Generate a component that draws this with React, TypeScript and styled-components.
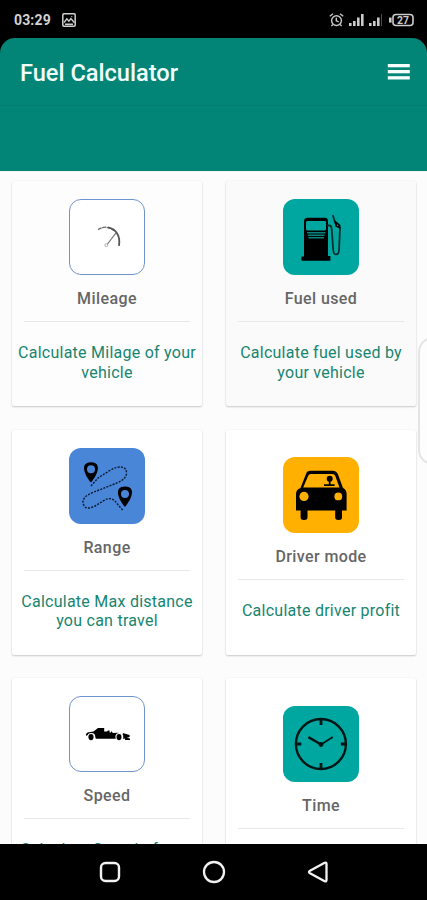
import React from "react";
import styled, { createGlobalStyle } from "styled-components";

const GlobalStyle = createGlobalStyle`
  * { box-sizing: border-box; }
  body { margin: 0; background: #000; font-family: Roboto, "Liberation Sans", sans-serif; }
  svg { display: block; flex: none; }
`;

const Phone = styled.div`
  position: relative;
  width: 427px;
  height: 900px;
  display: flex;
  flex-direction: column;
  overflow: hidden;
  background: #000;
`;

const StatusBar = styled.div`
  flex: none;
  height: 38px;
  display: flex;
  align-items: center;
  justify-content: space-between;
  padding: 1px 13px 0 14px;
  color: #d2d2d2;
`;

const StatusGroup = styled.div<{ $gap: number }>`
  display: flex;
  align-items: center;
  gap: ${(p) => p.$gap}px;
`;

const Clock = styled.span`
  width: 38px;
  font-size: 14px;
  font-weight: 700;
  letter-spacing: 0.15px;
  white-space: nowrap;
`;

const Header = styled.header`
  flex: none;
  height: 133px;
  background: #028577;
  border-radius: 15px 15px 0 0;
`;

const Toolbar = styled.div`
  height: 68px;
  padding: 0 17px 0 20px;
  display: flex;
  align-items: center;
  justify-content: space-between;
  border-bottom: 1px solid #047d70;
`;

const Title = styled.h1`
  margin: 3px 0 0;
  font-size: 23.6px;
  font-weight: 500;
  color: #f3fffc;
  white-space: nowrap;
`;

const MenuButton = styled.button`
  padding: 0;
  border: 0;
  background: none;
  color: #f6fffd;
`;

const Content = styled.main`
  flex: none;
  height: 673px;
  overflow: hidden;
  background: #fcfcfc;
  padding: 9px 11px 0 12px;
  border-top: 1px solid #f3f5f1;
`;

const Grid = styled.div`
  display: grid;
  grid-template-columns: 190px 190px;
  grid-auto-rows: 225px;
  gap: 23.6px 24px;
`;

const Card = styled.section<{ $bg: string }>`
  display: flex;
  flex-direction: column;
  align-items: center;
  justify-content: center;
  background: ${(p) => p.$bg};
  border-radius: 2px;
  box-shadow: 0 1px 2px rgba(0, 0, 0, 0.2), 0 0 2px rgba(0, 0, 0, 0.05);
`;

const Tile = styled.div<{ $fill: string; $outlined?: boolean }>`
  flex: none;
  width: 76px;
  height: 76px;
  border-radius: 12px;
  background: ${(p) => p.$fill};
  border: ${(p) => (p.$outlined ? "1px solid #6f93cc" : "0")};
  display: flex;
  align-items: center;
  justify-content: center;
`;

const Label = styled.h2`
  margin: 14px 0 0;
  height: 20px;
  line-height: 20px;
  font-size: 16px;
  font-weight: 500;
  letter-spacing: 0.4px;
  color: #666;
`;

const Divider = styled.hr`
  width: 166px;
  height: 1px;
  margin: 12px 0 0;
  border: 0;
  background: #e8e8e8;
`;

const Description = styled.p`
  margin: 21px 0 0;
  padding-bottom: 6px;
  font-size: 16px;
  line-height: 19.5px;
  letter-spacing: 0.25px;
  text-align: center;
  color: #178570;
`;

const Line = styled.span`
  display: block;
  white-space: nowrap;
`;

const EdgeHandle = styled.div`
  position: absolute;
  left: 418px;
  top: 337px;
  width: 30px;
  height: 128px;
  border: 2px solid #e4e4e4;
  border-radius: 15px;
  background: #fdfdfd;
`;

const NavBar = styled.nav`
  flex: 1;
  display: flex;
  align-items: center;
  justify-content: center;
  gap: 80px;
  padding-left: 1px;
`;

const PictureIcon = () => (
  <svg width="14" height="14" viewBox="0 0 14 14" fill="none" stroke="#cfcfcf">
    <rect x="0.8" y="0.8" width="12.4" height="12.4" rx="1.2" strokeWidth="1.5" />
    <path d="M2 9.6l2.8-3.8 2.1 2.4 2-2.6 3.6 4.2M3 11.2h8" strokeWidth="1.4" />
    <circle cx="9.8" cy="3.6" r=".6" fill="#cfcfcf" stroke="none" />
  </svg>
);

const AlarmIcon = () => (
  <svg width="15" height="14" viewBox="0 0 15 14" fill="none" stroke="#c9c9c9" strokeWidth="1.4">
    <circle cx="7.5" cy="7.6" r="4.9" />
    <path d="M7.3 4.8v3.1l2.4 1M.8 3.2L4 .8M14.2 3.2L11 .8M3.8 11.5l-1.4 1.6M11.2 11.5l1.4 1.6" />
  </svg>
);

const SignalIcon = ({ bars }: { bars: number }) => (
  <svg width="15" height="13" viewBox="0 0 15 13">
    {[3, 5, 8.5, 12].map((h, i) => (
      <rect key={h} x={i * 4} y={13 - h} width={i < bars ? 2.6 : 1} height={h} fill={i < bars ? "#cacaca" : "#4c4c4c"} />
    ))}
  </svg>
);

const BatteryIcon = () => (
  <svg width="25" height="14" viewBox="0 0 25 14">
    <rect x="0" y="4.6" width="2.6" height="5" fill="#ccc" />
    <rect x="4" y="1.5" width="20" height="11" rx="3" fill="none" stroke="#ccc" strokeWidth="1.6" />
    <text x="14" y="10.9" textAnchor="middle" fontSize="10.5" fontWeight="700" fill="#ccc">27</text>
  </svg>
);

const MenuIcon = () => (
  <svg width="23" height="18" viewBox="0 0 23 18" fill="currentColor">
    <rect x="0.8" y="1" width="22" height="3.3" />
    <rect x="0.8" y="7" width="22" height="3.3" />
    <rect x="0.8" y="13.2" width="22" height="3.3" />
  </svg>
);

const GaugeIcon = () => (
  <svg width="76" height="76" viewBox="0 0 76 76" fill="none">
    <path d="M29 30.5C34 27.3 40 27.2 45 31.8" stroke="#666" strokeWidth="1.3" strokeDasharray="4 .6" />
    <path d="M39 28.4C47.5 30 51.6 37.5 50 46.8" stroke="#555" strokeWidth="1.8" />
    <path d="M38.5 45L47 33.8" stroke="#777" strokeWidth="1.2" />
    <circle cx="37.4" cy="46.1" r="1.5" stroke="#999" strokeWidth=".8" />
  </svg>
);

const PumpIcon = () => (
  <svg width="76" height="76" viewBox="0 0 76 76">
    <path d="M18.5 57.6H21V22.5Q21 18.8 24.5 18.8H42Q45 18.8 45 22.5V57H47.4V61.8H18.5Z" fill="#000" />
    <rect x="23" y="22" width="20" height="9.4" rx="1.4" fill="#00a7a0" />
    <path d="M24 33.7H42.4M25 36.3H41.5M25.4 38.8H41" stroke="#07847f" strokeWidth="1.6" />
    <path d="M44 26.5H46.4C48.4 26.5 48.6 28 48.8 31L50.2 51C50.8 57.2 55.8 56.7 56 51L57 29L52.2 24L49.8 16" fill="none" stroke="#002f30" strokeWidth="1.8" />
    <path d="M51.5 21L57.4 26V30L52.4 27.4Z" />
    <circle cx="54.6" cy="26.2" r=".8" fill="#00a7a0" />
  </svg>
);

const RouteIcon = () => (
  <svg width="76" height="76" viewBox="0 0 76 76">
    <path
      d="M22 38L29 30L41 22.3C50 17 58 18 57.5 25.5C57 31 51 34 43 37L25 44C17 47 12.5 51 14.5 56.5C16.5 62 22 60 27 57.5L35 52.4C41 48.8 45 51 48 55.5L54 62.5"
      fill="none"
      stroke="#071831"
      strokeWidth="1.4"
      strokeDasharray="2 1.3"
    />
    <path fillRule="evenodd" d="M22 14.2C10.8 14.2 15 26.5 22 34.4C29 26.5 33.2 14.2 22 14.2ZM22 17.2a4 4 0 1 1 0 8a4 4 0 1 1 0-8Z" />
    <path fillRule="evenodd" d="M56 38.6C44.5 38.6 49 51.2 56 59C63 51.2 67.5 38.6 56 38.6ZM56 42a4 4 0 1 1 0 8a4 4 0 1 1 0-8Z" />
  </svg>
);

const CarIcon = () => (
  <svg width="76" height="76" viewBox="0 0 76 76">
    <path d="M17.5 31L23 17C23.8 14.7 25 13.7 27.5 13.7H49.8C52.4 13.7 53.8 15 54.8 17L60 31C62.5 32.2 63.6 34.3 63.6 37V53.6H59V60.5Q59 63 55.5 63Q52.2 63 52.2 60.5V53.6H24.5V60.5Q24.5 63 21 63Q17.6 63 17.6 60.5V53.6H13V37C13 34 14.5 32 17.5 31Z" />
    <path d="M20.2 30.5L25.2 18.7Q25.8 17 28 17H49.2Q51.6 17 52.2 18.7L56.5 30.5Z" fill="#ffb000" />
    <circle cx="46.7" cy="21.7" r="3" />
    <path d="M45.8 24h1.8v3.2h4v1.9h-10.6v-1.9h4.8z" />
    <circle cx="21" cy="39.4" r="4.6" fill="#ffb000" />
    <circle cx="55.3" cy="39.4" r="3.9" fill="#ffb000" />
  </svg>
);

const RacingCarIcon = () => (
  <svg width="76" height="76" viewBox="0 0 76 76">
    <path d="M16.8 38.3L18.5 36.5L24.5 35.5L29 31.9H35.2V35.6H38L39 34.4H40.6V36.6H42V35L44 37L49 36.7L54 38.5L55 42.8H27L24 38L19.5 38.5L17.5 40Z" />
    <circle cx="22.3" cy="41" r="4" fill="#fff" />
    <ellipse cx="22" cy="41.1" rx="2.6" ry="3.1" />
    <circle cx="50.3" cy="40.8" r="3.9" fill="#fff" />
    <ellipse cx="50" cy="41.1" rx="2.5" ry="3.1" />
    <path d="M53.8 37L60.6 39V41L57.8 41.8L61 42.4V44H56.4L54.4 41Z" />
  </svg>
);

const ClockIcon = () => (
  <svg width="76" height="76" viewBox="0 0 76 76" fill="none" stroke="#001514">
    <circle cx="37.9" cy="38" r="25" strokeWidth="2.4" />
    <path d="M38 13V19M38 57V63M13 38H18.3M57.8 38H63" strokeWidth="2.8" />
    <path d="M38 38.5L25.4 31.2" strokeWidth="2.5" />
    <path d="M38 38.5L49.8 31" strokeWidth="1.5" />
    <circle cx="38" cy="38.5" r="2" fill="#001514" />
  </svg>
);

type Tool = {
  name: string;
  lines: string[];
  fill: string;
  outlined?: boolean;
  bg: string;
  Icon: React.ComponentType;
};

const tools: Tool[] = [
  { name: "Mileage", lines: ["Calculate Milage of your", "vehicle"], fill: "#fff", outlined: true, bg: "#fdfdfd", Icon: GaugeIcon },
  { name: "Fuel used", lines: ["Calculate fuel used by", "your vehicle"], fill: "#00a7a0", bg: "#fafafa", Icon: PumpIcon },
  { name: "Range", lines: ["Calculate Max distance", "you can travel"], fill: "#4a86d8", bg: "#fff", Icon: RouteIcon },
  { name: "Driver mode", lines: ["Calculate driver profit"], fill: "#ffb000", bg: "#fff", Icon: CarIcon },
  { name: "Speed", lines: ["Calculate Speed of your", "vehicle"], fill: "#fff", outlined: true, bg: "#fff", Icon: RacingCarIcon },
  { name: "Time", lines: ["Calculate travel time"], fill: "#00a7a0", bg: "#fff", Icon: ClockIcon },
];

export default function App() {
  return (
    <Phone>
      <GlobalStyle />
      <StatusBar>
        <StatusGroup $gap={10}>
          <Clock>03:29</Clock>
          <PictureIcon />
        </StatusGroup>
        <StatusGroup $gap={5}>
          <AlarmIcon />
          <SignalIcon bars={4} />
          <SignalIcon bars={3} />
          <BatteryIcon />
        </StatusGroup>
      </StatusBar>
      <Header>
        <Toolbar>
          <Title>Fuel Calculator</Title>
          <MenuButton aria-label="Menu">
            <MenuIcon />
          </MenuButton>
        </Toolbar>
      </Header>
      <Content>
        <Grid>
          {tools.map(({ name, lines, fill, outlined, bg, Icon }) => (
            <Card key={name} $bg={bg}>
              <Tile $fill={fill} $outlined={outlined}>
                <Icon />
              </Tile>
              <Label>{name}</Label>
              <Divider />
              <Description>
                {lines.map((line) => (
                  <Line key={line}>{line}</Line>
                ))}
              </Description>
            </Card>
          ))}
        </Grid>
      </Content>
      <EdgeHandle />
      <NavBar>
        <svg width="24" height="24" viewBox="0 0 24 24" fill="none" stroke="#f2f2f2" strokeWidth="2.4">
          <rect x="3" y="3" width="18" height="18" rx="4.5" />
        </svg>
        <svg width="24" height="24" viewBox="0 0 24 24" fill="none" stroke="#f2f2f2" strokeWidth="2.3">
          <circle cx="12" cy="12" r="10" />
        </svg>
        <svg width="24" height="24" viewBox="0 0 24 24" fill="none" stroke="#f2f2f2" strokeWidth="2.3" strokeLinejoin="round">
          <path d="M18.7 2.8Q20.5 2 20.5 4V20Q20.5 22 18.7 21.2L4 13.2Q2 12 4 10.8Z" />
        </svg>
      </NavBar>
    </Phone>
  );
}
